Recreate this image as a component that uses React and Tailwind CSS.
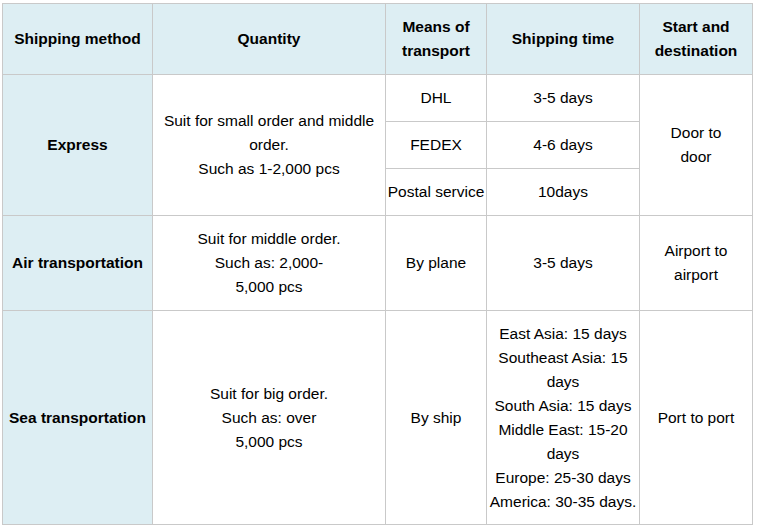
import React from "react";

const cell = "flex items-center justify-center text-center px-[2px]";
const blue = "bg-[#ddeef3]";
const white = "bg-white";

export default function App() {
  return (
    <div className="w-[757px] h-[528px] bg-white pt-[3px] pl-[2px] text-[15.5px] leading-[24px] text-black [font-family:'Liberation_Sans',Arial,sans-serif]">
      <div className="grid w-[751px] bg-[#c9c9c9] p-px gap-px grid-cols-[149px_232px_100px_152px_112px] grid-rows-[70px_46px_46px_46px_94px_213px]">
        <div className={`${cell} ${blue} font-bold`}>Shipping method</div>
        <div className={`${cell} ${blue} font-bold`}>Quantity</div>
        <div className={`${cell} ${blue} font-bold`}>Means of<br />transport</div>
        <div className={`${cell} ${blue} font-bold`}>Shipping time</div>
        <div className={`${cell} ${blue} font-bold`}>Start and<br />destination</div>

        <div className={`${cell} ${blue} font-bold row-span-3`}>Express</div>
        <div className={`${cell} ${white} row-span-3`}>
          <span>Suit for small order and middle<br />order.<br />Such as 1-2,000 pcs</span>
        </div>
        <div className={`${cell} ${white}`}>DHL</div>
        <div className={`${cell} ${white}`}>3-5 days</div>
        <div className={`${cell} ${white} row-span-3`}><span>Door to<br />door</span></div>
        <div className={`${cell} ${white}`}>FEDEX</div>
        <div className={`${cell} ${white}`}>4-6 days</div>
        <div className={`${cell} ${white} px-0 whitespace-nowrap`}>Postal service</div>
        <div className={`${cell} ${white}`}>10days</div>

        <div className={`${cell} ${blue} font-bold`}>Air transportation</div>
        <div className={`${cell} ${white}`}><span>Suit for middle order.<br />Such as: 2,000-<br />5,000 pcs</span></div>
        <div className={`${cell} ${white}`}>By plane</div>
        <div className={`${cell} ${white}`}>3-5 days</div>
        <div className={`${cell} ${white}`}><span>Airport to<br />airport</span></div>

        <div className={`${cell} ${blue} font-bold`}>Sea transportation</div>
        <div className={`${cell} ${white}`}><span>Suit for big order.<br />Such as: over<br />5,000 pcs</span></div>
        <div className={`${cell} ${white}`}>By ship</div>
        <div className={`${cell} ${white} px-0 whitespace-nowrap`}>
          <span>
            East Asia: 15 days<br />Southeast Asia: 15<br />days<br />South Asia: 15 days<br />Middle East: 15-20<br />days<br />Europe: 25-30 days<br />America: 30-35 days.
          </span>
        </div>
        <div className={`${cell} ${white}`}>Port to port</div>
      </div>
    </div>
  );
}
